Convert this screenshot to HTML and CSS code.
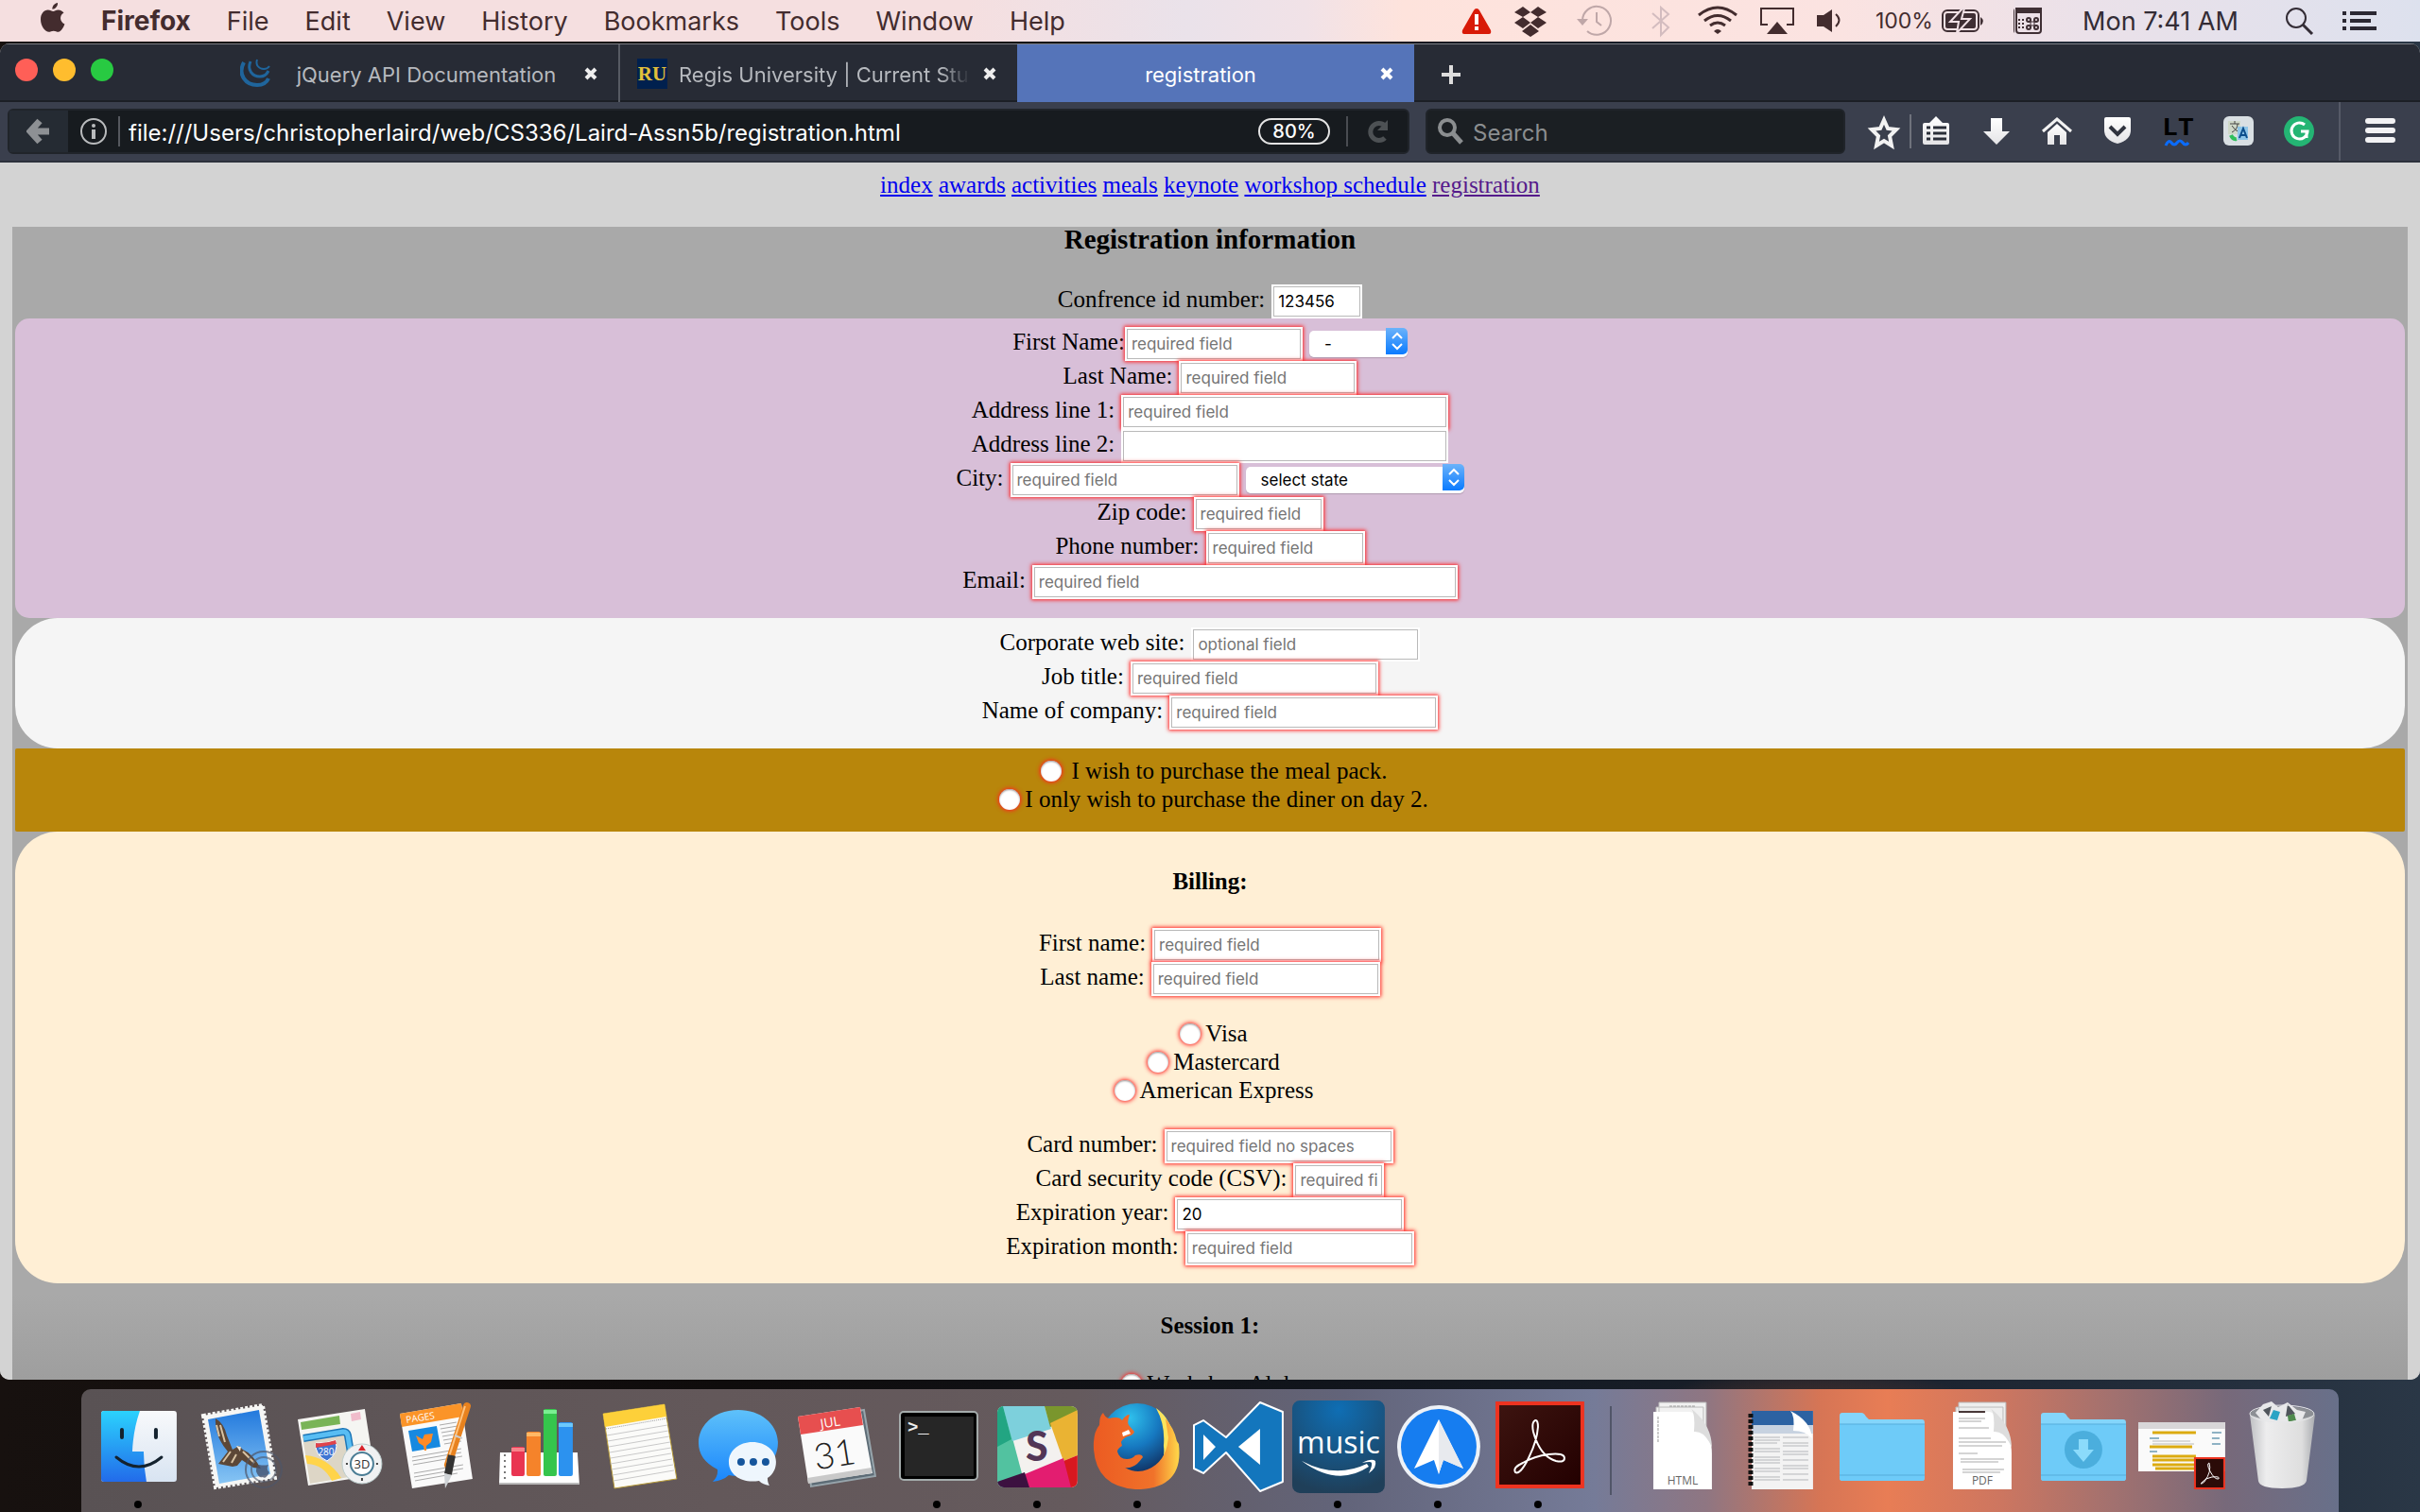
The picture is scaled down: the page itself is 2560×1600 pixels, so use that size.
FILE: index.html
```html
<!DOCTYPE html>
<html lang="en">
<head>
<meta charset="utf-8">
<title>registration</title>
<link rel="stylesheet" href="styles.css">
</head>
<body class="desktop">

<header class="menubar">
  <nav class="menus" aria-label="Menu bar">
    <button class="menu menu-apple" aria-label="Apple menu"><svg width="26" height="32" viewBox="0 0 26 32"><path d="M18 0c.4 3.400-2.400 6.700-5.600 6.700C12 3.600 14.800.5 18 0zM13.300 8.900c1.300 0 2.800-1.500 5.300-1.500 2.600 0 4.700 1.300 5.900 3.200-5.200 3-4.200 9.900.9 11.900-.9 2.600-3.600 8.300-6.700 8.300-1.900 0-2.900-1.100-5-1.100-2.200 0-3.300 1.100-5 1.100C5 30.800 0 24.600 0 17.400 0 11.300 3.600 7.400 7.700 7.400c2.400 0 4.200 1.500 5.600 1.500z" fill="#432c2e"/></svg></button>
    <button class="menu menu-app">Firefox</button>
    <button class="menu">File</button>
    <button class="menu">Edit</button>
    <button class="menu">View</button>
    <button class="menu">History</button>
    <button class="menu">Bookmarks</button>
    <button class="menu">Tools</button>
    <button class="menu">Window</button>
    <button class="menu">Help</button>
  </nav>
  <div class="status">
    <svg width="514" height="44" viewBox="1524 0 514 44" class="status-icons" aria-hidden="true">
      <path d="M1562 9q2 0 3 2l12 21q1 4-2 4h-26q-3 0-2-4l12-21q1-2 3-2z" fill="#d81a08"/><path d="M1560 15h4v11h-4zM1560 28h4v4h-4z" fill="#fff"/>
      <g fill="#432c2e"><path d="M1611 7l8 6-8 5-9-5zM1627 7l9 6-9 5-8-5zM1611 18l8 6-8 6-9-6zM1627 18l9 6-9 6-8-6zM1619 26l9 7-9 6-9-6z"/></g>
      <g fill="none" stroke="#bfa7a8" stroke-width="2"><path d="M1674 22a15 15 0 1 1 5 11M1689 13v10l5 4"/></g><path d="M1668 20h12l-6 7z" fill="#bfa7a8"/>
      <path d="M1748 14l17 15-8 8V8l8 7-17 15" fill="none" stroke="#d3bcbf" stroke-width="2"/>
      <g fill="none" stroke="#432c2e" stroke-width="3"><path d="M1797 16q20-16 40 0M1803 22q14-11 28 0M1809 27q8-6 16 0"/></g><path d="M1813 33q4-4 8 0l-4 3z" fill="#432c2e"/>
      <path d="M1870 26h-7V9h34v17h-7" fill="none" stroke="#432c2e" stroke-width="2"/><path d="M1880 23l11 13h-22z" fill="#432c2e"/>
      <path d="M1922 16h7l9-6v24l-9-6h-7z" fill="#432c2e"/><path d="M1942 15q7 6 0 13" fill="none" stroke="#432c2e" stroke-width="2"/>
    </svg>
    <span class="battery-text">100%</span>
    <svg width="92" height="44" viewBox="2048 0 92 44" aria-hidden="true">
      <rect x="2055" y="11" width="38" height="22" rx="5" fill="none" stroke="#3f2f34" stroke-width="2"/><path d="M2095 18q6 4 0 9z" fill="#3f2f34"/><rect x="2058" y="14" width="32" height="16" rx="2" fill="#3f2f34"/><path d="M2076 9l-13 14h9l-2 12 14-15h-9l3-11z" fill="#3f2f34" stroke="#f1e1e6" stroke-width="2"/>
      <g transform="translate(24 0)"><rect x="2107" y="9" width="26" height="26" rx="3" fill="none" stroke="#3f2f34" stroke-width="2"/></g>
    </svg>
    <svg class="input-menu" width="30" height="44" viewBox="2105 0 30 44" aria-hidden="true">
      <rect x="2107" y="9" width="26" height="26" rx="3" fill="none" stroke="#3f2f34" stroke-width="2"/><path d="M2106 8h28v6h-28z" fill="#3f2f34"/><path d="M2110 20v12M2114 20v12" stroke="#3f2f34" stroke-width="2" stroke-dasharray="2 2"/><path d="M2122 20v10M2126 20v10M2119 23h10M2119 27h10" stroke="#3f2f34" stroke-width="1"/><g fill="none" stroke="#3f2f34" stroke-width="2"><circle cx="2120" cy="21" r="2"/><circle cx="2128" cy="21" r="2"/><circle cx="2120" cy="29" r="2"/><circle cx="2128" cy="29" r="2"/></g>
    </svg>
    <time class="clock">Mon 7:41 AM</time>
    <svg width="108" height="44" viewBox="2410 0 108 44" aria-hidden="true"><circle cx="2429" cy="19" r="10" fill="none" stroke="#332c35" stroke-width="2"/><path d="M2436 26l10 10" stroke="#332c35" stroke-width="3"/><path d="M2478 14h4M2486 14h28M2478 22h4M2486 22h22M2478 30h4M2486 30h28" stroke="#2b2833" stroke-width="4"/></svg>
  </div>
</header>

<section class="window" aria-label="Firefox window">
  <div class="tabbar">
    <div class="lights"><button class="light red" aria-label="Close"></button><button class="light yellow" aria-label="Minimize"></button><button class="light green" aria-label="Zoom"></button></div>
    <div class="tab">
      <svg width="32" height="32" viewBox="0 0 32 32" aria-hidden="true"><g fill="none" stroke="#1f659c"><path d="M4 4C-3 17 6 28 18 28q9 0 12-7" stroke-width="4"/><path d="M11 3c-4 9 2 16 10 16q6 0 9-6" stroke-width="3"/><path d="M18 1c-2 6 2 10 7 10q4 0 6-3" stroke-width="2"/></g></svg>
      <span class="tab-title">jQuery API Documentation</span>
      <button class="tab-close" aria-label="Close tab"><svg width="14" height="14" viewBox="0 0 14 14"><path d="M2 2l10 10M12 2L2 12" stroke="#eee" stroke-width="4"/></svg></button>
    </div>
    <div class="tab tab-cut">
      <span class="favicon-ru">RU</span>
      <span class="tab-title">Regis University | Current Stu</span>
      <button class="tab-close" aria-label="Close tab"><svg width="14" height="14" viewBox="0 0 14 14"><path d="M2 2l10 10M12 2L2 12" stroke="#eee" stroke-width="4"/></svg></button>
    </div>
    <div class="tab tab-active">
      <span class="tab-title">registration</span>
      <button class="tab-close" aria-label="Close tab"><svg width="14" height="14" viewBox="0 0 14 14"><path d="M2 2l10 10M12 2L2 12" stroke="#fff" stroke-width="4"/></svg></button>
    </div>
    <button class="new-tab" aria-label="New tab"><svg width="22" height="22" viewBox="0 0 22 22"><path d="M11 1v20M1 11h20" stroke="#ddd" stroke-width="4"/></svg></button>
  </div>

  <div class="toolbar">
    <div class="urlbar">
      <button class="back" aria-label="Back"><svg width="26" height="28" viewBox="0 0 26 28"><path d="M14 3L4 14l10 11M4 14h20" fill="none" stroke="#8d9094" stroke-width="7"/></svg></button>
      <svg class="info" width="30" height="30" viewBox="0 0 30 30" aria-hidden="true"><circle cx="15" cy="15" r="13" fill="none" stroke="#b9bbbd" stroke-width="2"/><path d="M15 13v10" stroke="#b9bbbd" stroke-width="4"/><circle cx="15" cy="9" r="2" fill="#b9bbbd"/></svg>
      <input class="url" aria-label="Address" value="file:///Users/christopherlaird/web/CS336/Laird-Assn5b/registration.html">
      <button class="zoom">80%</button>
      <span class="bar-divider"></span>
      <button class="reload" aria-label="Reload"><svg width="24" height="28" viewBox="0 0 24 28"><path d="M20 21a9 9 0 1 1 0-13" fill="none" stroke="#4d5154" stroke-width="5"/><path d="M23 2v11H12z" fill="#4d5154"/></svg></button>
    </div>
    <label class="searchbar">
      <svg width="28" height="30" viewBox="0 0 28 30" aria-hidden="true"><circle cx="11" cy="11" r="8" fill="none" stroke="#8b8e90" stroke-width="4"/><path d="M17 17l9 10" stroke="#8b8e90" stroke-width="5"/></svg>
      <input class="search" aria-label="Search" placeholder="Search">
    </label>
    <svg class="tools" width="598" height="64" viewBox="1962 108 598 64" role="img" aria-label="Toolbar buttons">
      <defs><linearGradient id="silver" x1="0" y1="0" x2="0" y2="1"><stop offset="0" stop-color="#fff"/><stop offset="1" stop-color="#e4e4e6"/></linearGradient></defs>
      <path d="M1993 128l4 9 9 1-7 7 2 10-8-5-8 5 2-10-7-7 9-1z" fill="none" stroke="#f2f2f2" stroke-width="4"/>
      <path d="M2021 122v36" stroke="#6f727c" stroke-width="2"/>
      <path d="M2036 131h5l7-7 7 7h5q2 0 2 2v19q0 2-2 2h-24q-2 0-2-2v-19q0-2 2-2z" fill="url(#silver)"/><path d="M2038 136h4M2038 142h4M2038 148h4M2045 136h14M2045 142h14M2045 148h14" stroke="#2a2e38" stroke-width="3"/>
      <path d="M2106 126h12v14h8l-14 14-14-14h8z" fill="url(#silver)"/>
      <path d="M2161 140l15-13 15 13" fill="none" stroke="#f2f2f2" stroke-width="3"/><path d="M2166 141l10-9 10 9v13h-7v-10h-6v10h-7z" fill="url(#silver)"/>
      <path d="M2228 125h24q2 0 2 2v12q0 10-14 14-14-4-14-14v-12q0-2 2-2z" fill="url(#silver)"/><path d="M2232 135l8 8 8-8" fill="none" stroke="#30343f" stroke-width="4"/>
      <text x="2304" y="144" text-anchor="middle" class="lt">LT</text><path d="M2291 155q3-7 6-3t6 0 6 0 6 0" fill="none" stroke="#0a6cff" stroke-width="3"/>
      <rect x="2352" y="124" width="32" height="31" rx="6" fill="#d9dfe3"/><rect x="2357" y="129" width="13" height="14" fill="#cfd8c8"/><path d="M2359 132h10M2364 129v3M2361 141q6-3 6-9M2361 134q3 5 8 7" stroke="#444" stroke-width="1" fill="none"/><rect x="2367" y="135" width="11" height="14" fill="#8ec5e8"/><path d="M2369 147l4-10 4 10M2370 144h5" stroke="#0b4d8b" stroke-width="2" fill="none"/><path d="M2360 144q2 5 6 4" fill="none" stroke="#2fbf5b" stroke-width="4"/>
      <circle cx="2432" cy="140" r="16" fill="#24b574"/><path d="M2438 133a8.500 8.500 0 1 0 3 7h-7M2440 140v7" fill="none" stroke="#fff" stroke-width="3"/>
      <path d="M2475 109v62" stroke="#565a67" stroke-width="2"/>
      <path d="M2505 129h26M2505 139h26M2505 149h26" stroke="#f2f2f4" stroke-width="6" stroke-linecap="round"/>
    </svg>
  </div>

  <main class="page">
    <nav class="links">
      <a href="#index">index</a> <a href="#awards">awards</a> <a href="#activities">activities</a> <a href="#meals">meals</a> <a href="#keynote">keynote</a> <a href="#workshops">workshop schedule</a> <a href="#registration" class="visited">registration</a>
    </nav>
    <form class="registration">
      <h2 class="title">Registration information</h2>
      <div class="row"><label for="cid">Confrence id number:</label><input class="field w-xs" id="cid" value="123456"></div>

      <section class="group contact">
        <div class="row tight"><label for="fn">First Name:</label><input class="field req w-m" id="fn" placeholder="required field"><span class="select w-title"><select id="title" aria-label="Title"><option>-</option></select><svg width="23" height="28" viewBox="0 0 23 28"><path d="M7 11l5-5 5 5M7 17l5 5 5-5" fill="none" stroke="#fff" stroke-width="2"/></svg></span></div>
        <div class="row"><label for="ln">Last Name:</label><input class="field req w-m" id="ln" placeholder="required field"></div>
        <div class="row"><label for="a1">Address line 1:</label><input class="field req w-xl" id="a1" placeholder="required field"></div>
        <div class="row"><label for="a2">Address line 2:</label><input class="field w-xl" id="a2"></div>
        <div class="row"><label for="city">City:</label><input class="field req w-l" id="city" placeholder="required field"><span class="select w-state"><select id="state" aria-label="State"><option>select state</option></select><svg width="23" height="28" viewBox="0 0 23 28"><path d="M7 11l5-5 5 5M7 17l5 5 5-5" fill="none" stroke="#fff" stroke-width="2"/></svg></span></div>
        <div class="row"><label for="zip">Zip code:</label><input class="field req w-s" id="zip" placeholder="required field"></div>
        <div class="row"><label for="phone">Phone number:</label><input class="field req w-phone" id="phone" placeholder="required field"></div>
        <div class="row"><label for="email">Email:</label><input class="field req w-email" id="email" placeholder="required field"></div>
      </section>

      <section class="group work">
        <div class="row"><label for="site">Corporate web site:</label><input class="field w-l" id="site" placeholder="optional field"></div>
        <div class="row"><label for="job">Job title:</label><input class="field req w-job" id="job" placeholder="required field"></div>
        <div class="row"><label for="company">Name of company:</label><input class="field req w-company" id="company" placeholder="required field"></div>
      </section>

      <section class="group meals">
        <div class="choice spaced"><input type="radio" name="meal" id="pack"><label for="pack">I wish to purchase the meal pack.</label></div>
        <div class="choice"><input type="radio" name="meal" id="diner"><label for="diner">I only wish to purchase the diner on day 2.</label></div>
      </section>

      <section class="group billing">
        <h3 class="subtitle">Billing:</h3>
        <div class="row"><label for="bfn">First name:</label><input class="field req w-l" id="bfn" placeholder="required field"></div>
        <div class="row"><label for="bln">Last name:</label><input class="field req w-l" id="bln" placeholder="required field"></div>
        <div class="cards">
          <div class="choice"><input type="radio" name="card" id="visa"><label for="visa">Visa</label></div>
          <div class="choice"><input type="radio" name="card" id="mc"><label for="mc">Mastercard</label></div>
          <div class="choice"><input type="radio" name="card" id="amex"><label for="amex">American Express</label></div>
        </div>
        <div class="row"><label for="num">Card number:</label><input class="field req w-l" id="num" placeholder="required field no spaces"></div>
        <div class="row"><label for="csv">Card security code (CSV):</label><input class="field req w-xs" id="csv" placeholder="required field"></div>
        <div class="row"><label for="year">Expiration year:</label><input class="field req w-l" id="year" value="20"></div>
        <div class="row"><label for="month">Expiration month:</label><input class="field req w-l" id="month" placeholder="required field"></div>
      </section>

      <section class="sessions">
        <h3 class="subtitle">Session 1:</h3>
        <div class="choice"><input type="radio" name="s1" id="alpha"><label for="alpha">Workshop Alpha</label></div>
      </section>
    </form>
  </main>
</section>

<footer class="dock-area">
  <div class="dock">
    <svg class="app" viewBox="0 0 106 130" role="img" aria-label="Finder"><defs><linearGradient id="fb" x1="0" y1="0" x2="0" y2="1"><stop offset="0" stop-color="#2bd2fd"/><stop offset="1" stop-color="#226bea"/></linearGradient><linearGradient id="fw" x1="0" y1="0" x2="0" y2="1"><stop offset="0" stop-color="#f8f9fb"/><stop offset="1" stop-color="#d8e4f2"/></linearGradient></defs><rect x="13" y="23" width="80" height="75" rx="3" fill="url(#fw)"/><path d="M16 23h38q-7 20-8 43h12q0 16 3 32H16q-3 0-3-3V26q0-3 3-3z" fill="url(#fb)"/><path d="M35 43v8M71 43v8" stroke="#14222e" stroke-width="4" stroke-linecap="round"/><path d="M29 72q24 20 48 0" fill="none" stroke="#14222e" stroke-width="3" stroke-linecap="round"/><circle cx="52" cy="122" r="4"/></svg>
    <svg class="app" viewBox="0 0 106 130" role="img" aria-label="Mail"><defs><linearGradient id="sky" x1="0" y1="0" x2="0" y2="1"><stop offset="0" stop-color="#2279dd"/><stop offset="1" stop-color="#87c5f4"/></linearGradient></defs><path d="M15 28L78 17 91 94 28 104z" fill="#f6f6f4" stroke="#f6f6f4" stroke-width="4" stroke-dasharray="3 2"/><path d="M20 32l54-10 12 68-54 10z" fill="url(#sky)"/><path d="M28 31q9 5 12 18l6 15 7-4 4 4q10 4 19 20l-8-1-12-8-5 6-5 1-15-3 10-13Q27 50 28 31z" fill="#5c4737"/><path d="M29 38l3 12M33 38l5 18M44 66l-8 11M50 69l-5 9M57 66l12 12" stroke="#d8c3a3" stroke-width="2"/><path d="M50 60l5 1-1 5z" fill="#f4ead8"/><circle cx="79" cy="85" r="19" fill="none" stroke="#4e5668" stroke-width="2" opacity=".7"/><circle cx="79" cy="85" r="13" fill="none" stroke="#4e5668" stroke-width="2" opacity=".6"/><path d="M74 80q5 1 10 0-3 5 1 8-4 8-7 5-4 2-7-6 0-6 3-7z" fill="#46516b" opacity=".8"/></svg>
    <svg class="app" viewBox="0 0 106 130" role="img" aria-label="Maps"><path d="M9 32L80 21 91 91 20 102z" fill="#f5f5f2"/><path d="M12 35l41-7 1 9-41 6z" fill="#79b457"/><path d="M65 26l10-2 1 8-10 2z" fill="#f0bccb"/><path d="M14 50l47-7 8 49-47 8z" fill="#ddd6c6"/><path d="M15 52l42-7q4 0 5 4l7 42" fill="none" stroke="#1d77b8" stroke-width="8"/><path d="M15 52l42-7q4 0 5 4l7 42" fill="none" stroke="#58bdf3" stroke-width="5"/><path d="M17 70q24 2 38 24l-10 3Q37 80 19 79z" fill="#ffd44a"/><path d="M28 57q10 1 21-3 4 14-9 22-13-6-12-19z" fill="#3f75d2" stroke="#fff"/><path d="M28 57q10 1 21-3l1 4-22 4z" fill="#e0434a"/><text x="39" y="70" text-anchor="middle" fill="#fff" font-size="10" class="icon-text">280</text><circle cx="77" cy="79" r="21" fill="#f0f1f2" stroke="#bcc" /><circle cx="77" cy="79" r="12" fill="#fff" stroke="#4b7d95" stroke-width="2"/><path d="M77 59l4 6h-8z" fill="#d8232a"/><path d="M60 79h2M92 79h2M77 94v3" stroke="#444" stroke-width="2"/><text x="77" y="84" text-anchor="middle" fill="#333" font-size="13" class="icon-text">3D</text></svg>
    <svg class="app" viewBox="0 0 106 130" role="img" aria-label="Pages"><path d="M11 26L76 15 88 95 24 105z" fill="#fafafa"/><path d="M11 26L76 15l2 14-65 11z" fill="#fb9428"/><text x="18" y="36" transform="rotate(-9 18 36)" fill="#fff" font-size="10" class="icon-text">PAGES</text><path d="M20 44l30-5 4 22-30 5z" fill="#1789e0"/><path d="M28 49l7 4 2-5 9-1-2 9-5 4v5h-2l-1-5-5-3z" fill="#ff8a26"/><path d="M53 38l18-3M54 42l18-3M55 46l18-3M56 50l18-3M57 54l18-3M58 58l18-3M24 72l52-9M24 76l52-9M25 80l52-9M26 89l52-9M26 93l52-9M27 97l45-8" stroke="#aaa" stroke-width="1"/><path d="M82 18L62 80" stroke="#e8821e" stroke-width="8" stroke-linecap="round"/><path d="M80 18L61 78" stroke="#ffc480" stroke-width="2"/><path d="M66 70l-4 20" stroke="#333" stroke-width="8"/><path d="M58 89l8 2-7 14z" fill="#cfd3d6"/><path d="M69 49l8 3" stroke="#ccc" stroke-width="2"/></svg>
    <svg class="app" viewBox="0 0 106 130" role="img" aria-label="Numbers"><path d="M11 67h82l2 34H10z" fill="#fff"/><path d="M10 99h85v2H10z" fill="#bbb"/><path d="M15 70h2M15 76h2M15 82h2M15 88h2M15 94h2" stroke="#777" stroke-width="2"/><rect x="23" y="61" width="14" height="31" rx="2" fill="#e93451"/><rect x="39" y="45" width="15" height="47" rx="2" fill="#f5832a"/><rect x="57" y="21" width="14" height="71" rx="2" fill="#35c54c"/><rect x="73" y="35" width="15" height="57" rx="2" fill="#2c92ef"/><path d="M23 64h14" stroke="#f7838b" stroke-width="4"/><path d="M39 48h15" stroke="#ffb866" stroke-width="4"/><path d="M57 24h14" stroke="#7aef92" stroke-width="4"/><path d="M73 38h15" stroke="#6cc8fb" stroke-width="4"/></svg>
    <svg class="app" viewBox="0 0 106 130" role="img" aria-label="Notes"><path d="M14 26L79 16 92 95 26 105z" fill="#fbfbf9" stroke="#b79b38"/><path d="M14 26L79 16l2 13-65 11z" fill="#fdd03a"/><path d="M17 42l64-11" stroke="#999" stroke-dasharray="1 1"/><path d="M18 49l64-11M19 55l64-11M20 61l64-11M21 67l64-11M22 73l64-11M22 79l64-11M23 85l64-11M24 91l64-11M25 97l64-11" stroke="#c9c9c9"/></svg>
    <svg class="app" viewBox="0 0 106 130" role="img" aria-label="Messages"><defs><linearGradient id="msg" x1="0" y1="0" x2="0" y2="1"><stop offset="0" stop-color="#5ec1fa"/><stop offset="1" stop-color="#1a86fc"/></linearGradient></defs><path d="M52 22c24 0 42 15 42 35S76 92 52 92q-6 0-10-1-6 6-17 7 6-6 5-13Q10 75 10 57c0-20 18-35 42-35z" fill="url(#msg)"/><path d="M67 56c14 0 25 9 25 21 0 7-3 13-9 17 0 4 1 6 2 8-5-1-8-2-11-5-18 3-32-6-32-20 0-12 11-21 25-21z" fill="#eef6fd"/><g fill="#15559c"><circle cx="55" cy="77" r="4"/><circle cx="68" cy="77" r="4"/><circle cx="81" cy="77" r="4"/></g></svg>
    <svg class="app" viewBox="0 0 106 130" role="img" aria-label="Calendar"><path d="M14 34l65-12 12 70-68 11z" fill="#5d6c76" stroke="#97a5ac" stroke-width="2"/><path d="M9 29L75 19 88 89 20 99z" fill="#fafafa"/><path d="M9 29L75 19l3 19-66 10z" fill="#e74f4f"/><path d="M19 94l68-11v6l-67 11z" fill="#c9c9c9"/><text x="44" y="40" text-anchor="middle" transform="rotate(-9 44 40)" fill="#fff" font-size="14" class="icon-text">JUL</text><text x="50" y="82" text-anchor="middle" transform="rotate(-9 50 82)" fill="#222" font-size="38" class="icon-thin">31</text></svg>
    <svg class="app" viewBox="0 0 106 130" role="img" aria-label="Terminal"><rect x="11" y="24" width="82" height="72" rx="4" fill="#000" stroke="#a5acac" stroke-width="2"/><rect x="16" y="29" width="73" height="63" fill="#262626"/><text x="19" y="46" fill="#eee" class="icon-mono">&gt;_</text><circle cx="50" cy="122" r="4"/></svg>
    <svg class="app" viewBox="0 0 106 130" role="img" aria-label="Slack"><defs><clipPath id="sc"><rect x="8" y="18" width="85" height="86" rx="7"/></clipPath></defs><g clip-path="url(#sc)"><rect x="8" y="18" width="85" height="86" fill="#f3f1ef"/><path d="M8 18h7l23 86H8z" fill="#52c2a0"/><path d="M8 18h6l9 35-15 8z" fill="#22a582"/><path d="M14 18h44l7 24-41 13z" fill="#7dd0dc"/><path d="M58 18h35v8L64 40z" fill="#7a962d"/><path d="M64 36l29-14v48L78 76z" fill="#eab333"/><path d="M78 76l15-6v34h-8z" fill="#d8181f"/><path d="M37 90l41-17 8 31H41z" fill="#e31d70"/><path d="M8 98l29-10 5 16H8z" fill="#3c1140"/></g><text x="50" y="76" text-anchor="middle" fill="#523656" font-size="43" class="icon-heavy">S</text><circle cx="50" cy="122" r="4"/></svg>
    <svg class="app" viewBox="0 0 106 130" role="img" aria-label="Firefox"><defs><radialGradient id="glo" cx=".4" cy=".2" r=".8"><stop offset="0" stop-color="#2fc0ec"/><stop offset=".5" stop-color="#1678c0"/><stop offset="1" stop-color="#102b5a"/></radialGradient><linearGradient id="fox" x1="0" y1="0" x2="1" y2="0"><stop offset="0" stop-color="#ec5b22"/><stop offset=".7" stop-color="#f0722a"/><stop offset="1" stop-color="#ffd94a"/></linearGradient></defs><circle cx="50" cy="54" r="39" fill="url(#glo)"/><path d="M70 20q20 14 18 42-2 18-16 26 8-14 6-28 2-22-8-40z" fill="#fbe45d"/><path d="M10 38q0-10 4-13 2 5 6 6 11-3 14 2 4-6 8-6-3 8-1 11l6 7q-1 4-7 5-5 2-7 6l1 4q-5 3-5 6 2 8 10 8 6 0 9-4 7-2 8 2-3 4-6 7-6 5-13 4 12 7 24 2 20-8 22-34l-3-20q9 10 12 24l2 3q6 48-46 48Q7 103 4 64q-1-18 6-26z" fill="url(#fox)"/><path d="M34 46l7-3 2 4-8 3z" fill="#fff"/><circle cx="50" cy="122" r="4"/></svg>
    <svg class="app" viewBox="0 0 106 130" role="img" aria-label="Visual Studio Code"><path d="M74 14l24 10v74l-24 10-36-41-24 22-10-5V38l10-5 24 18z" fill="#1376bd" stroke="#fff" stroke-width="2" stroke-linejoin="round"/><path d="M14 48l13 13-13 14zM74 42v38L51 61z" fill="#fff"/><circle cx="50" cy="122" r="4"/></svg>
    <svg class="app" viewBox="0 0 106 130" role="img" aria-label="Amazon Music"><defs><radialGradient id="mus" cx=".5" cy=".1" r=".9"><stop offset="0" stop-color="#0f6eb4"/><stop offset="1" stop-color="#1f3f59"/></radialGradient></defs><rect x="2" y="12" width="98" height="98" rx="8" fill="url(#mus)"/><text x="51" y="68" text-anchor="middle" fill="#fff" font-size="32" class="icon-music">music</text><path d="M12 76q38 28 71 6l-2-3q-33 16-69-3zM76 78q10-2 10 0 1 3-3 11 9-6 7-13-4-3-14 2z" fill="#fff"/><circle cx="50" cy="122" r="4"/></svg>
    <svg class="app" viewBox="0 0 106 130" role="img" aria-label="Spark"><circle cx="51" cy="61" r="44" fill="#eef2f7"/><circle cx="51" cy="61" r="40" fill="#167df0"/><path d="M51 32l26 52-21-9-5 15-5-15-21 9z" fill="#fff"/><path d="M51 32v58l5-15 21 9z" fill="#e8eaee"/><circle cx="50" cy="122" r="4"/></svg>
    <svg class="app" viewBox="0 0 106 130" role="img" aria-label="Acrobat"><defs><linearGradient id="acr" x1="0" y1="0" x2="1" y2="1"><stop offset="0" stop-color="#3d1410"/><stop offset="1" stop-color="#230000"/></linearGradient></defs><rect x="7" y="15" width="90" height="88" fill="url(#acr)" stroke="#ee3320" stroke-width="4"/><path d="M47 33q-4 2-2 12 7 26 24 31 9 2 9-3 0-6-17-4-15 2-27 9-11 5-8 10 5 3 14-15 9-18 10-33 0-8-3-7z" fill="none" stroke="#fff" stroke-width="2"/><circle cx="50" cy="122" r="4"/></svg>
    <span class="dock-divider"></span>
    <svg class="app" viewBox="0 0 106 130" role="img" aria-label="HTML documents"><path d="M30 14h50v40H30zM27 19h50v40H27z" fill="#f1f1f1" stroke="#bbb"/><path d="M24 24h38q10 1 14 21 10 5 10 23v38H24z" fill="#fff"/><path d="M62 19q7 3 5 26 12-1 19 17 0-25-24-43z" fill="#ddd"/><path d="M41 18h27M29 29v27" stroke="#999" stroke-dasharray="3 1"/><text x="55" y="101" text-anchor="middle" fill="#666" font-size="12" class="icon-text">HTML</text></svg>
    <svg class="app" viewBox="0 0 106 130" role="img" aria-label="Documents"><path d="M22 23h65v83H22z" fill="#f3f3f3"/><path d="M22 23h65v15H22z" fill="#2c62a2"/><path d="M22 38h65v9H22z" fill="#c7d2e0"/><path d="M25 51h27M25 54h27M25 57h24M25 63h27M25 66h27M25 72h27M25 75h27M25 78h27M25 84h27M25 87h27M25 93h27M25 96h27M55 51h27M55 57h27M55 60h27M55 66h27M55 69h27M55 75h27M55 81h27M55 84h27M55 90h27M55 96h27" stroke="#b5b7ba"/><path d="M63 23q5 5 3 21 13 0 20 8-1-18-23-29z" fill="#fff"/><path d="M21 26v78" stroke="#111" stroke-width="5" stroke-dasharray="4 2"/></svg>
    <svg class="app" viewBox="0 0 106 130" role="img" aria-label="Folder"><path d="M13 25h20q3 0 5 4l3 3h56q3 0 3 3v59q0 3-3 3H13q-3 0-3-3V28q0-3 3-3z" fill="#84d5fb"/><path d="M10 37h90v57q0 3-3 3H13q-3 0-3-3z" fill="#6ecbf8"/><path d="M10 91h90M10 37h90" stroke="#55aedb"/></svg>
    <svg class="app" viewBox="0 0 106 130" role="img" aria-label="PDF documents"><path d="M30 14h50v40H30zM27 19h50v40H27z" fill="#eee" stroke="#bbb"/><path d="M24 24h38q10 1 14 21 10 5 10 23v38H24z" fill="#fff"/><path d="M62 19q7 3 5 26 12-1 19 17 0-25-24-43z" fill="#ddd"/><path d="M30 24h28" stroke="#433" stroke-width="2"/><path d="M30 31h28M30 34h24M30 41h32M30 52h34M30 56h50M30 60h46M30 68h20M32 74h46M32 77h40M34 85h44M34 88h40" stroke="#aaa"/><text x="55" y="101" text-anchor="middle" fill="#666" font-size="12" class="icon-text">PDF</text></svg>
    <svg class="app" viewBox="0 0 106 130" role="img" aria-label="Downloads"><path d="M14 25h20q3 0 5 4l3 3h56q3 0 3 3v59q0 3-3 3H14q-3 0-3-3V28q0-3 3-3z" fill="#84d5fb"/><path d="M11 37h90v57q0 3-3 3H14q-3 0-3-3z" fill="#6ecbf8"/><path d="M11 91h90M11 37h90" stroke="#55aedb"/><circle cx="56" cy="64" r="20" fill="#4baedd"/><path d="M51 53h10v11h6L56 77 45 64h6z" fill="#8bdbfb"/></svg>
    <svg class="app" viewBox="0 0 106 130" role="img" aria-label="Minimized document"><path d="M8 35h92v52H8z" fill="#fafafa"/><path d="M8 35h92v7H8z" fill="#d8d6d8"/><path d="M23 46h46M20 61h45M23 71h46M23 75h46M23 80h46M26 84h42" stroke="#dcab10" stroke-width="3"/><path d="M20 52h10M20 66h8M86 46h10M86 52h8M86 58h9" stroke="#8eb2c4" stroke-width="2"/><path d="M23 55h40M23 58h44" stroke="#bbb"/><rect x="68" y="73" width="31" height="32" fill="#2b0b08" stroke="#ee3320" stroke-width="2"/><path d="M83 78q-3 1 1 9 5 9 9 8 2-3-7-2-7 1-11 6-2 3 3-1 8-11 5-20z" fill="none" stroke="#fff"/></svg>
    <svg class="app" viewBox="0 0 106 130" role="img" aria-label="Trash"><defs><linearGradient id="bin" x1="0" y1="0" x2="1" y2="0"><stop offset="0" stop-color="#bfc0c3"/><stop offset=".25" stop-color="#ededee"/><stop offset=".8" stop-color="#dedede"/><stop offset="1" stop-color="#aaacb0"/></linearGradient></defs><ellipse cx="54" cy="26" rx="34" ry="8" fill="#8c8f94"/><path d="M26 25l8-9 9-3 7 6 10-5 10 8 9 2-5 12-20 3-18-2z" fill="#e8e8ea"/><path d="M34 22l9-4-3 11zM60 16l8 10-10 3z" fill="#50555c"/><path d="M45 22l7 2-3 9-8-2z" fill="#2ba4c5"/><path d="M60 28l7-2 2 7-8 2z" fill="#4f8a4e"/><path d="M20 27q34 15 69 0l-9 70q-2 8-26 8t-25-8z" fill="url(#bin)"/><ellipse cx="54" cy="26" rx="34" ry="9" fill="none" stroke="#e6e7e9" stroke-width="1"/></svg>
  </div>
</footer>
</body>
</html>
```
FILE: styles.css
```css
* { box-sizing: border-box; }

.desktop {
  margin: 0;
  height: 100vh;
  overflow: hidden;
  display: flex;
  flex-direction: column;
  font-family: Inter, "Noto Sans", sans-serif;
  background:
    radial-gradient(ellipse 260px 160px at 75% 100%, #a5502e, transparent),
    linear-gradient(90deg, #17110f 0, #0f0c0c 30%, #11151c 55%, #1c2430 80%, #2a3746 100%);
}

button { border: 0; background: none; padding: 0; font: inherit; color: inherit; }
svg { display: block; flex: none; }

/* Menu bar */
.menubar {
  flex: none;
  height: 44px;
  margin-bottom: 2px;
  display: flex;
  justify-content: space-between;
  align-items: center;
  font-size: 27px;
  color: #432c2e;
  background: linear-gradient(90deg, #f5dfe0 0, #f5dfe0 40%, #eae2ea 49%, #f1e2e7 54%, #fee3dc 58%, #fbe3e1 76%, #ebe1e9 86%, #dde1ee 100%);
}
.menus { display: flex; align-items: center; gap: 38px; padding-left: 43px; }
.menu-apple { margin-bottom: 6px; }
.menu-app { font-size: 28px; font-weight: 700; }
.status { display: flex; align-items: center; padding-right: 42px; }
.battery-text { width: 68px; padding-left: 4px; font-size: 23px; white-space: nowrap; }
.status-icons { margin-right: -58px; }
.input-menu { margin-left: -9px; background: #ede1e8; }
.clock { width: 249px; text-align: center; color: #332c35; white-space: nowrap; }

/* Browser window */
.window {
  flex: 1;
  min-height: 0;
  display: flex;
  flex-direction: column;
  overflow: hidden;
  border-radius: 10px;
  background: #d3d3d3;
}
.tabbar {
  flex: none;
  height: 62px;
  display: flex;
  background: #272b35;
  border-top: 1px solid #7b7d84;
  border-bottom: 2px solid #1c1f26;
}
.lights { width: 236px; display: flex; gap: 16px; padding: 15px 0 0 16px; }
.light { width: 24px; height: 24px; border-radius: 50%; }
.red { background: #ff5f57; }
.yellow { background: #ffbd2e; }
.green { background: #28ca42; }
.tab {
  width: 420px;
  margin-bottom: -2px;
  padding: 0 20px 0 18px;
  display: flex;
  align-items: center;
  gap: 12px;
  font-size: 22px;
  color: #b6b9be;
  border-right: 2px solid #565a63;
}
.tab-title { flex: 1; overflow: hidden; white-space: nowrap; text-align: center; padding-top: 2px; }
.tab-cut { border-right: 0; }
.tab-cut .tab-title { text-align: left; mask-image: linear-gradient(90deg, #000 90%, transparent); }
.tab-active { background: #5574b9; color: #fff; border-right: 0; }
.tab-close { width: 18px; display: flex; justify-content: center; }
.favicon-ru { width: 32px; height: 32px; background: #00204e; color: #e3c03b; font: bold 21px/32px "Liberation Serif", serif; text-align: center; }
.new-tab { padding: 4px 28px 0; }

.toolbar {
  flex: none;
  height: 64px;
  display: flex;
  align-items: center;
  padding-left: 8px;
  background: #3a3f4d;
  border-bottom: 2px solid #2c303b;
}
.urlbar, .searchbar {
  height: 48px;
  display: flex;
  align-items: center;
  background: #171b1f;
  border: 2px solid #20242a;
  border-radius: 6px;
}
.urlbar { flex: 1; margin-right: 17px; }
.back { width: 62px; height: 44px; display: flex; align-items: center; justify-content: center; background: #252b33; }
.info { margin: 0 11px 0 12px; }
.url {
  flex: 1;
  min-width: 0;
  height: 32px;
  padding: 2px 0 0 9px;
  border: 0;
  border-left: 2px solid #55585e;
  background: none;
  color: #fff;
  font: 24px Inter, sans-serif;
}
.zoom { width: 76px; height: 28px; border: 2px solid #e4e4e4; border-radius: 14px; color: #fff; font-size: 20px; line-height: 24px; font-weight: 500; }
.bar-divider { width: 2px; height: 32px; margin: 0 19px 0 17px; background: #4a4d52; }
.reload { margin-right: 20px; }
.searchbar { width: 444px; margin-right: 10px; padding-left: 10px; gap: 10px; background: #1b1f23; }
.search { min-width: 0; flex: 1; padding: 2px 0 0; border: 0; background: none; font: 24px Inter, sans-serif; color: #fff; }
.search::placeholder { color: #8b8e90; }
.lt { font: bold 28px "Liberation Mono", monospace; fill: #000; }

/* Registration page */
.page {
  flex: 1;
  min-height: 0;
  overflow: hidden;
  padding: 9px 13px 0;
  font-family: "Liberation Serif", "Times New Roman", serif;
  font-size: 25px;
  line-height: 30px;
  color: #000;
  background: #d3d3d3;
}
.links { height: 59px; text-align: center; }
.links a { color: #0000ee; }
.links .visited { color: #551a8b; }
.registration { padding: 0 3px; background: linear-gradient(#a9a9a9 1130px, #9e9e9e 1220px); }
.title { margin: 0; padding-bottom: 34px; font-size: 29px; line-height: 27px; text-align: center; }
.subtitle { margin: 0; font-size: 25px; line-height: 30px; text-align: center; }
.row { display: flex; justify-content: center; align-items: baseline; gap: 7px; height: 36px; }
.row label { line-height: 30px; white-space: nowrap; }
.tight label { margin-right: -7px; }

.field {
  height: 36px;
  padding: 0 5px;
  border: 2px solid #fff;
  background: #fff;
  box-shadow: inset 0 0 0 1px #b9b9b9;
  font: 17px Inter, sans-serif;
  color: #000;
}
.field::placeholder { color: #757575; opacity: 1; }
.req { box-shadow: inset 0 0 0 1px #b9b9b9, 0 0 4px 1px #ff2020; }
.w-xs { width: 96px; }
.w-title { width: 104px; }
.w-s { width: 137px; }
.w-phone { width: 168px; }
.w-m { width: 188px; }
.w-l { width: 242px; }
.w-job { width: 262px; }
.w-company { width: 284px; }
.w-xl { width: 346px; }
.w-email { width: 450px; }
.w-state { width: 231px; }

.select { position: relative; height: 28px; }
.select select {
  appearance: none;
  width: 100%;
  height: 28px;
  padding: 0 30px 0 16px;
  border: 0;
  border-radius: 5px;
  background: #fff;
  box-shadow: 0 1px 1px #b09ab0;
  font: 17px Inter, sans-serif;
  color: #000;
}
.select svg { position: absolute; right: 0; top: 0; border-radius: 0 5px 5px 0; background: linear-gradient(#6cb3fa, #0a7bff); pointer-events: none; }

.group.contact { height: 317px; padding-top: 9px; border-radius: 15px; background: #d8bfd8; }
.group.work { height: 138px; padding-top: 10px; border-radius: 45px; background: #f5f5f5; }
.group.meals { height: 88px; padding-top: 9px; border-radius: 2px; background: #b8860b; }
.group.billing { height: 478px; padding-top: 38px; border-radius: 45px; background: #ffefd5; }
.billing .subtitle { margin-bottom: 34px; }
.cards { padding: 25px 0 26px; }
.sessions { padding: 30px 0 80px; }
.sessions .subtitle { margin-bottom: 32px; }

.choice { display: flex; justify-content: center; align-items: center; gap: 5px; height: 30px; padding-left: 8px; }
.choice.spaced { gap: 11px; }
.choice input {
  appearance: none;
  flex: none;
  width: 22px;
  height: 22px;
  margin: 0;
  border-radius: 50%;
  background: #fff;
  box-shadow: inset 0 1px 2px #999, 0 0 4px 1px #f22;
}

/* Dock */
.dock-area { flex: none; padding: 10px 86px 0; }
.dock {
  height: 130px;
  padding: 0 8px;
  display: flex;
  border-radius: 10px 10px 0 0;
  background: linear-gradient(90deg, #595254 0, #63585a 28%, #655a5d 44%, #62647a 56%, #757b98 67%, #8f7682 72%, #d67555 77%, #e87d55 80%, #cd7660 85%, #a2716f 90%, #77697a 95%, #68708a 100%);
}
.app { flex: 1 1 0; min-width: 0; height: 130px; }
.dock-divider { width: 2px; height: 94px; margin: 18px 20px 0; background: #515568; }
.icon-text { font-family: "Open Sans", sans-serif; }
.icon-thin { font-family: Lato, sans-serif; font-weight: 300; }
.icon-music { font-family: "Open Sans", sans-serif; font-weight: 400; }
.icon-heavy { font-family: Lato, sans-serif; font-weight: 900; }
.icon-mono { font: bold 19px "Liberation Mono", monospace; }
```
